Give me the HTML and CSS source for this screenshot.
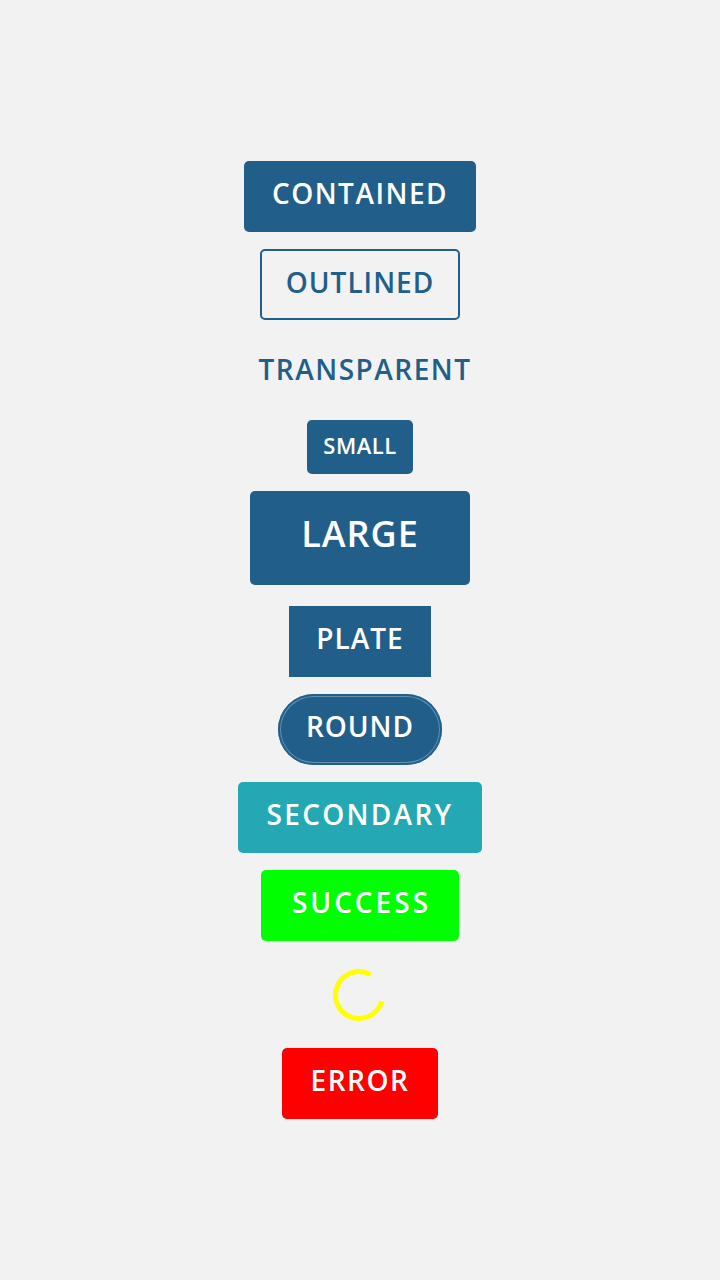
FILE: index.html
```html
<!DOCTYPE html>
<html lang="en">
<head>
<meta charset="utf-8">
<title>Buttons</title>
<link rel="stylesheet" href="styles.css">
</head>
<body>
<main class="stack">
  <button class="btn contained w-contained">CONTAINED</button>
  <button class="btn outlined">OUTLINED</button>
  <button class="btn transparent">TRANSPARENT</button>
  <button class="btn contained small">SMALL</button>
  <button class="btn contained large">LARGE</button>
  <button class="btn contained plate">PLATE</button>
  <button class="btn contained round">ROUND</button>
  <button class="btn secondary">SECONDARY</button>
  <button class="btn success">SUCCESS</button>
  <div class="loader">
    <svg class="spinner" width="60" height="60" viewBox="0 0 60 60" aria-hidden="true">
      <path d="M52.7 36.1 A23.5 23.5 0 1 1 41.75 9.65" fill="none" stroke="#ffff00" stroke-width="5"/>
    </svg>
  </div>
  <button class="btn error">ERROR</button>
</main>
</body>
</html>
```

FILE: styles.css
```css
html, body {
  margin: 0;
  padding: 0;
  background: #f2f2f2;
}

.stack {
  display: flex;
  flex-direction: column;
  align-items: center;
  gap: 17px;
  padding-top: 161px;
}

.btn {
  box-sizing: border-box;
  display: flex;
  align-items: center;
  justify-content: center;
  height: 71px;
  padding: 0 0 7px;
  margin: 0;
  border: none;
  border-radius: 5px;
  font-family: "Open Sans", "DejaVu Sans", sans-serif;
  font-weight: 600;
  font-size: 28px;
  letter-spacing: 1px;
  color: #ffffff;
  background: transparent;
  line-height: 1;
  white-space: nowrap;
}

.contained {
  background: #215f8a;
}

.w-contained {
  width: 232px;
  letter-spacing: 1.5px;
}

.outlined {
  width: 200px;
  border: 2px solid #215f8a;
  color: #215f8a;
  padding-bottom: 5px;
}

.transparent {
  width: 230px;
  color: #215f8a;
  padding-left: 10px;
  letter-spacing: 1.5px;
}

.small {
  width: 106px;
  height: 54px;
  font-size: 22px;
  padding-bottom: 5px;
  margin-top: -5px;
  letter-spacing: 0.5px;
}

.large {
  width: 220px;
  height: 94px;
  font-size: 36px;
  padding-bottom: 9px;
  letter-spacing: 1px;
}

.plate {
  width: 142px;
  border-radius: 0;
  margin-top: 4px;
}

.round {
  width: 164px;
  border-radius: 36px;
  box-shadow: inset 0 0 0 2px #215f8a, inset 0 0 0 3px rgba(255, 255, 255, 0.3);
}

.secondary {
  width: 244px;
  background: #23a8b4;
  letter-spacing: 2.3px;
}

.success {
  width: 198px;
  background: #00ff00;
  letter-spacing: 3px;
  padding-left: 3px;
}

.error {
  width: 156px;
  background: #ff0000;
  letter-spacing: 1.5px;
}

.loader {
  height: 73px;
  display: flex;
  align-items: center;
  justify-content: center;
  margin-left: -2px;
}

.spinner {
  display: block;
}
```
